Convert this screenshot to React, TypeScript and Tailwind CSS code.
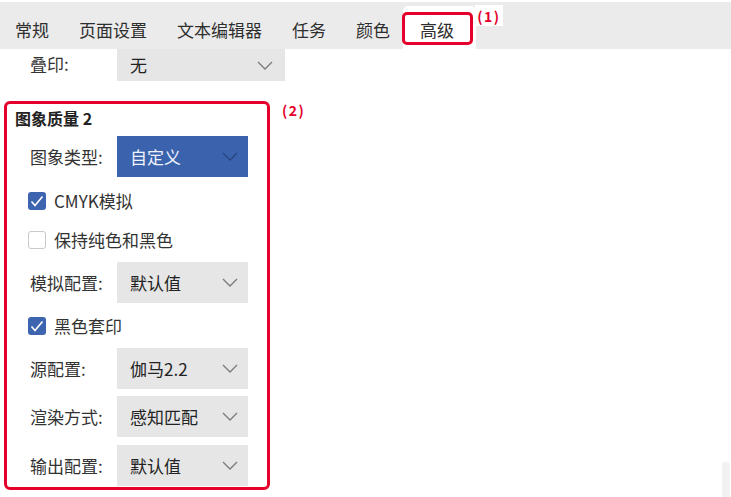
import React from "react";

const FONT = { fontFamily: '"Noto Sans CJK SC", "Noto Sans", sans-serif' };

function Chevron({ color }: { color: string }) {
  return (
    <svg width="16" height="9" viewBox="0 0 16 9" fill="none">
      <polyline points="1,1 8,8 15,1" stroke={color} strokeWidth="1.3" fill="none" />
    </svg>
  );
}

function Select({ value, blue = false, wide = false }: { value: string; blue?: boolean; wide?: boolean }) {
  return (
    <div
      className={
        "flex items-center justify-between pl-[13px] " +
        (wide ? "w-[168px] h-[32px] pr-[12px] " : "w-[131px] h-[41px] pr-[10px] ") +
        (blue ? "bg-[#3b62ad] text-[#eef2fa]" : "bg-[#e6e6e6] text-[#222222]")
      }
    >
      <span className="text-[17px] leading-[24px]">{value}</span>
      <Chevron color={blue ? "#27457e" : "#7a7a7a"} />
    </div>
  );
}

function Row({ label, value, blue = false, mt }: { label: string; value: string; blue?: boolean; mt: string }) {
  return (
    <div className={"flex items-center pl-[23px] " + mt}>
      <span className="w-[87px] text-[17px] leading-[24px] text-[#333333]">{label}</span>
      <Select value={value} blue={blue} />
    </div>
  );
}

function Check({ label, checked, mt }: { label: string; checked: boolean; mt: string }) {
  return (
    <div className={"flex items-center h-[24px] pl-[21px] " + mt}>
      {checked ? (
        <div className="w-[18px] h-[18px] rounded-[3px] bg-[#3d64ae] flex items-center justify-center">
          <svg width="14" height="12" viewBox="0 0 14 12" fill="none">
            <polyline points="1.5,6.5 5,10.5 12.5,1.5" stroke="#ffffff" strokeWidth="1.6" fill="none" />
          </svg>
        </div>
      ) : (
        <div className="w-[18px] h-[18px] rounded-[3px] border border-[#c9c9c9] bg-white" />
      )}
      <span className="ml-[8px] text-[17px] leading-[24px] text-[#333333]">{label}</span>
    </div>
  );
}

export default function App() {
  const tabs = ["常规", "页面设置", "文本编辑器", "任务", "颜色"];
  return (
    <div className="relative w-[731px] h-[497px] bg-white overflow-hidden" style={FONT}>
      <div className="h-[2px]" />
      <div className="h-[47px] bg-[#ebebeb] flex">
        {tabs.map((t) => (
          <div key={t} className="px-[15px] h-full flex items-center pt-[8px] text-[17px] leading-[24px] text-[#2e2e2e]">
            {t}
          </div>
        ))}
        <div className="relative ml-[-2px] mt-[4px] h-[43px] pl-[17px] pr-[22px] bg-white rounded-t-[5px] flex items-center pt-[4px] text-[17px] leading-[24px] text-[#2e2e2e]">
          高级
          <div className="absolute left-[-1px] top-[6px] w-[71px] h-[33px] border-[3px] border-[#e4002b] rounded-[5px]" />
        </div>
      </div>

      <div className="absolute left-[475px] top-[5px] w-[28px] h-[21px] bg-white flex items-center justify-center text-[14px] leading-[18px] font-bold text-[#e4002b] tracking-[1.5px]">
        (1)
      </div>

      <div className="flex items-center">
        <span className="pl-[30px] w-[117px] text-[17px] leading-[24px] text-[#333333] mt-[-3px]">叠印:</span>
        <Select value="无" wide />
      </div>

      <div className="mt-[20px] ml-[4px] w-[266px] h-[389px] border-[3px] border-[#e4002b] rounded-[6px]">
        <div className="pt-[2px] pl-[8px] text-[16px] leading-[24px] font-bold text-[#222222]">图象质量 2</div>
        <Row label="图象类型:" value="自定义" blue mt="mt-[6px]" />
        <Check label="CMYK模拟" checked mt="mt-[12px]" />
        <Check label="保持纯色和黑色" checked={false} mt="mt-[15px]" />
        <Row label="模拟配置:" value="默认值" mt="mt-[10px]" />
        <Check label="黑色套印" checked mt="mt-[11px]" />
        <Row label="源配置:" value="伽马2.2" mt="mt-[10px]" />
        <Row label="渲染方式:" value="感知匹配" mt="mt-[7px]" />
        <Row label="输出配置:" value="默认值" mt="mt-[8px]" />
      </div>

      <div className="absolute left-[282px] top-[101px] text-[14px] leading-[18px] font-bold text-[#e4002b] tracking-[1.5px]">(2)</div>

      <div className="absolute left-[722px] top-[462px] w-[8px] h-[36px] bg-[#f2f2f2] rounded-t-[3px]" />
    </div>
  );
}
